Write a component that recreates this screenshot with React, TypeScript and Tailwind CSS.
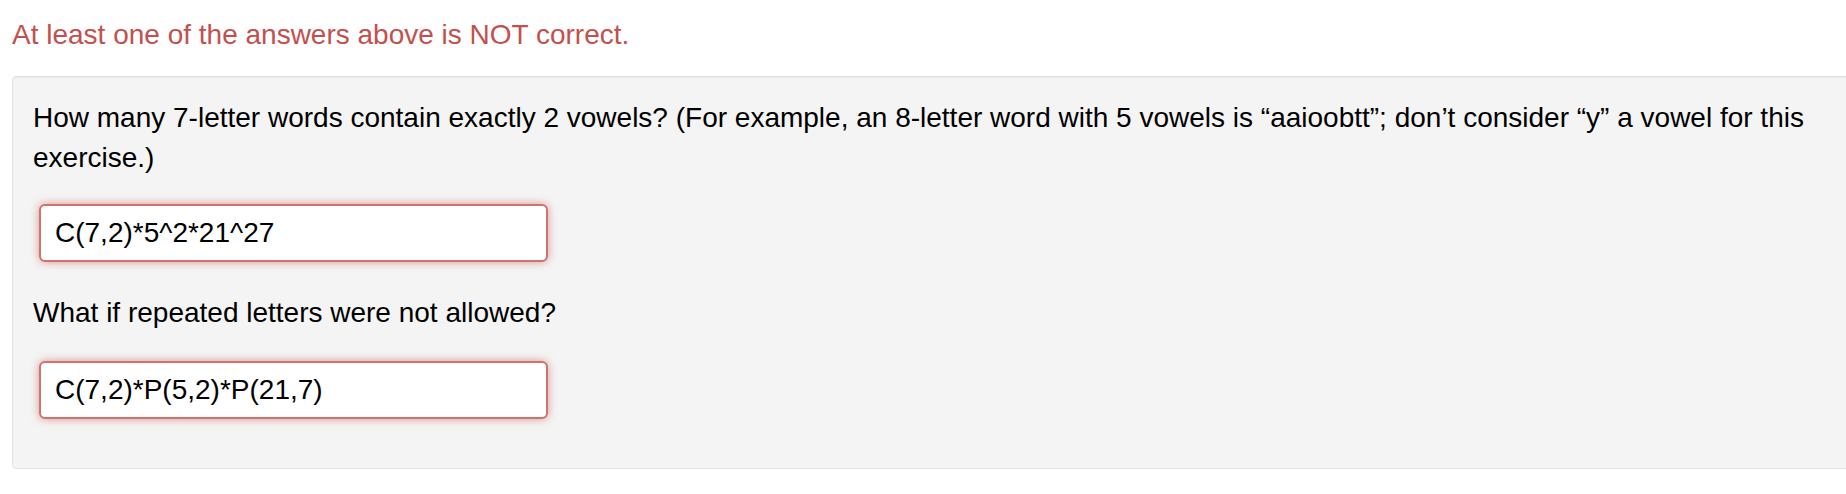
export default function App() {
    return (
        <div className="w-full h-[494px] overflow-hidden bg-white font-['Liberation_Sans',Arial,sans-serif] text-[28px] leading-[40px] text-black">
            <div className="pl-[12px] pt-[15px]">
                {/* Feedback message */}
                <p className="text-[#c4504d]">At least one of the answers above is NOT correct.</p>

                {/* Question panel */}
                <div className="mt-[21px] w-[1860px] rounded-[4px] border border-[#e3e3e3] bg-[#f4f4f4] pl-[20px] pr-[24px] pt-[21px] pb-[49px] shadow-[inset_0_1px_1px_rgba(0,0,0,0.05)]">
                    <p>
                        How many 7-letter words contain exactly 2 vowels? (For example, an 8-letter word with 5 vowels is “aaioobtt”; don’t consider “y” a vowel for this exercise.)
                    </p>

                    <AnswerBox value="C(7,2)*5^2*21^27" className="mt-[26px]" />

                    <p className="mt-[31px]">What if repeated letters were not allowed?</p>

                    <AnswerBox value="C(7,2)*P(5,2)*P(21,7)" className="mt-[28px]" />
                </div>
            </div>
        </div>
    );
}

const AnswerBox = ({ value, className }: { value: string; className?: string }) => (
    <div
        className={`ml-[6px] flex h-[58px] w-[509px] items-center rounded-[6px] border-2 border-[#d0726e] bg-white px-[14px] shadow-[0_0_9px_rgba(200,70,66,0.55)] ${className ?? ''}`}
    >
        <span>{value}</span>
    </div>
);
